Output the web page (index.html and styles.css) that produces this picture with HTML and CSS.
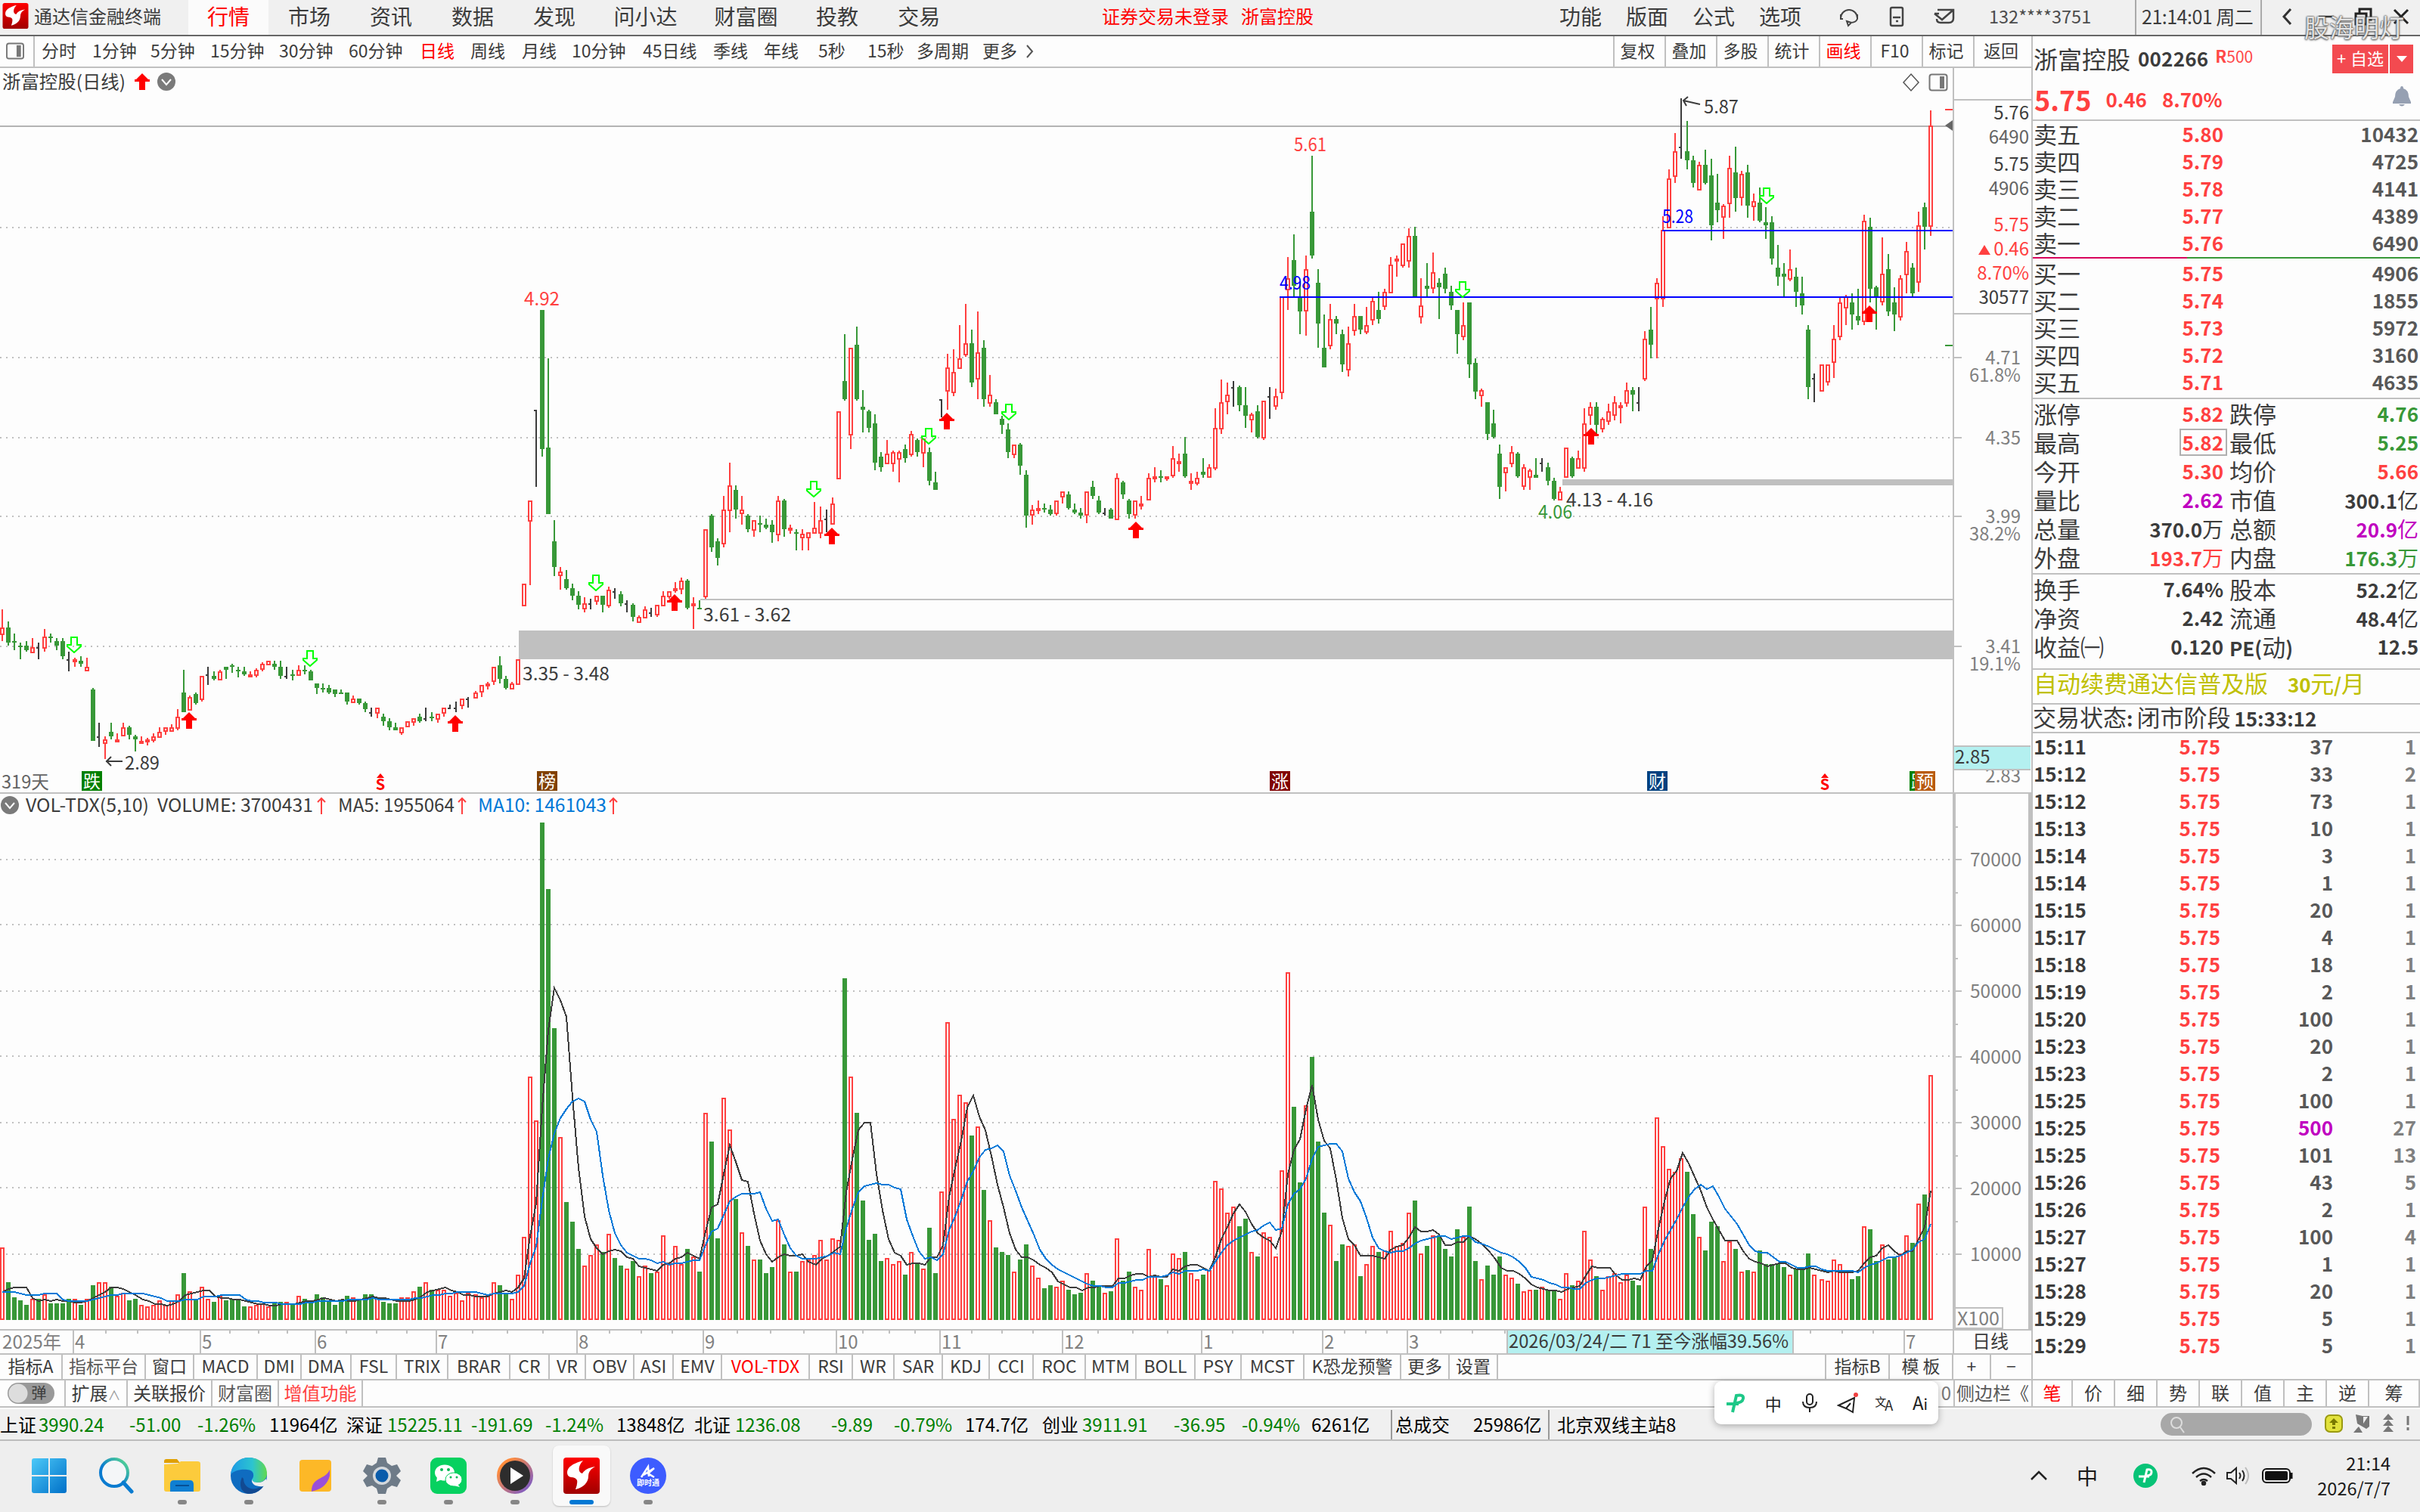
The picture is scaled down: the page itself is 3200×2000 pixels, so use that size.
FILE: index.html
```html
<!DOCTYPE html>
<html lang="zh-CN">
<head>
    <meta charset="utf-8">
    <title>通达信金融终端</title>
    <link rel="stylesheet" href="styles.css">
</head>

<body>
<svg class="defs" width="0" height="0">
    <symbol id="tdx" viewBox="0 0 48 48">
        <defs>
            <linearGradient id="tdxbg" x1="0" y1="0" x2="0" y2="1">
                <stop offset="0" stop-color="#f00"/><stop offset="1" stop-color="#a00000"/>
            </linearGradient>
        </defs>
        <rect width="48" height="48" rx="4" fill="url(#tdxbg)"/>
        <path d="M26 4C12 8 5 13 5 20q0 5 5 6 6 0 8 4 1 4-2 12c10-2 17-9 17-17 0-6 3-10 9-13-8 1-14 4-17 9-6-1-6-10 1-17z" fill="#fff"/>
    </symbol>
    <symbol id="up" viewBox="0 0 20 22">
        <path d="M10 0l8 8h2v3h-6v11H6V11H0V8h2z" fill="#f00"/>
    </symbol>
    <symbol id="down" viewBox="0 0 20 22">
        <path d="M6 1h8v10h5v2l-9 8-9-8v-2h5z" fill="none" stroke="#0f0" stroke-width="2"/>
    </symbol>
    <symbol id="fold" viewBox="0 0 24 24">
        <circle cx="12" cy="12" r="12" fill="#7a7a7a"/>
        <path d="M6 9l6 7 6-7" fill="none" stroke="#fff" stroke-width="2"/>
    </symbol>
    <symbol id="side" viewBox="0 0 26 24">
        <rect x="1.500" y="1.500" width="23" height="21" rx="3" fill="none" stroke="#777" stroke-width="2"/>
        <rect x="15" y="4" width="6" height="16" fill="#777"/>
    </symbol>
</svg>

<header class="titlebar">
    <div class="brand"><svg width="35" height="34"><use href="#tdx"/></svg><span>通达信金融终端</span></div>
    <nav class="menu">
        <a class="on">行情</a><a>市场</a><a>资讯</a><a>数据</a><a>发现</a><a class="w3">问小达</a><a class="w3">财富圈</a><a>投教</a><a>交易</a>
    </nav>
    <div class="login"><span>证券交易未登录</span><span>浙富控股</span></div>
    <nav class="tools"><a>功能</a><a>版面</a><a>公式</a><a>选项</a></nav>
    <div class="sysicons">
        <svg width="30" height="28" viewBox="0 0 30 28" fill="none" stroke="#444" stroke-width="2">
            <path d="M4 16a11 11 0 1 1 22 0M4 11v6h3M26 11v6q-2 5-9 5M12 20l6 2-4 4z"/>
        </svg>
        <svg width="20" height="28" viewBox="0 0 20 28" fill="none" stroke="#444" stroke-width="2.500">
            <rect x="2" y="2" width="16" height="24" rx="2"/><path d="M5 15h10M9 20h3"/>
        </svg>
        <svg width="30" height="24" viewBox="0 0 30 24" fill="none" stroke="#444" stroke-width="2.500">
            <path d="M6 3h21v11q0 6-6 6H10q-5 0-5-5M2 8l10 8L27 3M2 8h6"/>
        </svg>
    </div>
    <div class="account">132****3751</div>
    <div class="clock">21:14:01 周二</div>
    <div class="winbtns">
        <svg width="16" height="24" viewBox="0 0 16 24"><path d="M13 2L4 12l9 10" fill="none" stroke="#333" stroke-width="3"/></svg>
        <svg width="20" height="24" viewBox="0 0 20 24"><path d="M0 12h20" stroke="#333" stroke-width="2.500"/></svg>
        <svg width="24" height="24" viewBox="0 0 24 24"><path d="M7 7V2h15v14h-5M2 8h14v14H2z" fill="none" stroke="#222" stroke-width="3"/></svg>
        <svg width="22" height="22" viewBox="0 0 22 22"><path d="M2 2l18 18M20 2L2 20" stroke="#222" stroke-width="3"/></svg>
    </div>
    <div class="watermark">股海明灯</div>
</header>

<main>
    <section class="left">
        <div class="periods">
            <div class="sw"><svg width="26" height="23"><use href="#side"/></svg></div>
            <div class="plist">
                <a>分时</a><a>1分钟</a><a>5分钟</a><a>15分钟</a><a>30分钟</a><a>60分钟</a><a class="red">日线</a><a>周线</a><a>月线</a><a>10分钟</a><a>45日线</a><a>季线</a><a>年线</a><a>5秒</a><a>15秒</a><a>多周期</a><a>更多<svg width="12" height="20" viewBox="0 0 12 20"><path d="M2 2l7 8-7 8" fill="none" stroke="#555" stroke-width="2"/></svg></a>
            </div>
            <div class="pbtns">
                <a>复权</a><a>叠加</a><a>多股</a><a>统计</a><a class="red">画线</a><a>F10</a><a>标记</a><a>返回</a>
            </div>
        </div>
        <svg id="kline" width="2686" height="958" viewBox="0 90 2686 958"></svg>
        <svg id="vol" width="2686" height="708" viewBox="0 1050 2686 708"></svg>
        <svg id="dates" width="2686" height="30" viewBox="0 1760 2686 30"></svg>
        <div class="tabs">
            <a>指标A</a><a class="dim">指标平台</a><a>窗口</a><a>MACD</a><a>DMI</a><a>DMA</a><a>FSL</a><a>TRIX</a><a>BRAR</a><a>CR</a><a>VR</a><a>OBV</a><a>ASI</a><a>EMV</a><a class="red">VOL-TDX</a><a>RSI</a><a>WR</a><a>SAR</a><a>KDJ</a><a>CCI</a><a>ROC</a><a>MTM</a><a>BOLL</a><a>PSY</a><a>MCST</a><a>K恐龙预警</a><a>更多</a><a>设置</a><a></a><a>指标B</a><a>模 板</a><a>+</a><a>−</a>
        </div>
    </section>

    <aside class="quote">
        <div class="head">
            <div class="name">
                <span class="cn">浙富控股</span><b>002266</b><span class="r500"><b>R</b>500</span>
                <span class="add"><i>+<u></u>自选</i><i class="dd"><svg width="14" height="8"><path d="M0 0h14l-7 8z" fill="#fff"/></svg></i></span>
            </div>
            <div class="last">
                <b class="big">5.75</b><b>0.46</b><b>8.70%</b>
                <svg class="bell" width="24" height="27" viewBox="0 0 24 27"><path d="M12 0q2 0 2 3 7 2 7 11l3 7v2H0v-2l3-7Q3 5 10 3q0-3 2-3zM8 24h8q-4 5-8 0z" fill="#96a0b2"/></svg>
            </div>
        </div>
        <div class="book">
            <div><span>卖五</span><b class="r">5.80</b><b>10432</b></div>
            <div><span>卖四</span><b class="r">5.79</b><b>4725</b></div>
            <div><span>卖三</span><b class="r">5.78</b><b>4141</b></div>
            <div><span>卖二</span><b class="r">5.77</b><b>4389</b></div>
            <div><span>卖一</span><b class="r">5.76</b><b>6490</b></div>
        </div>
        <div class="ratio"></div>
        <div class="book buy">
            <div><span>买一</span><b class="r">5.75</b><b>4906</b></div>
            <div><span>买二</span><b class="r">5.74</b><b>1855</b></div>
            <div><span>买三</span><b class="r">5.73</b><b>5972</b></div>
            <div><span>买四</span><b class="r">5.72</b><b>3160</b></div>
            <div><span>买五</span><b class="r">5.71</b><b>4635</b></div>
        </div>
        <div class="detail">
            <div><span>涨停</span><b class="r">5.82</b><span>跌停</span><b class="g">4.76</b></div>
            <div><span>最高</span><b class="r box">5.82</b><span>最低</span><b class="g">5.25</b></div>
            <div><span>今开</span><b class="r">5.30</b><span>均价</span><b class="r">5.66</b></div>
            <div><span>量比</span><b class="m">2.62</b><span>市值</span><b>300.1<i>亿</i></b></div>
            <div><span>总量</span><b>370.0<i>万</i></b><span>总额</span><b class="m">20.9<i>亿</i></b></div>
            <div><span>外盘</span><b class="r">193.7<i>万</i></b><span>内盘</span><b class="g">176.3<i>万</i></b></div>
        </div>
        <div class="detail base">
            <div><span>换手</span><b>7.64%</b><span>股本</span><b>52.2<i>亿</i></b></div>
            <div><span>净资</span><b>2.42</b><span>流通</span><b>48.4<i>亿</i></b></div>
            <div><span>收益㈠</span><b>0.120</b><span class="pe"><b>PE(</b>动<b>)</b></span><b>12.5</b></div>
        </div>
        <div class="ad">自动续费通达信普及版<span><b>30</b>元<b>/</b>月</span></div>
        <div class="state">交易状态<b>:</b> 闭市阶段 <b>15:33:12</b></div>
        <div class="ticks" id="ticks"></div>
    </aside>
</main>

<div class="ext">
    <a><i class="pill">弹</i></a><a>扩展<small>∧</small></a><a>关联报价</a><a class="dim">财富圈</a><a class="hot">增值功能</a><a class="rest">0</a><a class="dim">侧边栏《</a>
    <a class="red">笔</a><a>价</a><a>细</a><a>势</a><a>联</a><a>值</a><a>主</a><a>逆</a><a>筹</a>
</div>

<div class="status">
    <span>上证</span><em>3990.24</em><em>-51.00</em><em>-1.26%</em><span>11964亿</span>
    <span>深证</span><em>15225.11</em><em>-191.69</em><em>-1.24%</em><span>13848亿</span>
    <span>北证</span><em>1236.08</em><em>-9.89</em><em>-0.79%</em><span>174.7亿</span>
    <span>创业</span><em>3911.91</em><em>-36.95</em><em>-0.94%</em><span>6261亿</span>
    <span class="sep">总成交</span><span>25986亿</span><span class="sep host">北京双线主站8</span>
    <div class="search"><svg width="22" height="24" viewBox="0 0 22 24"><circle cx="10" cy="9" r="7" fill="none" stroke="#ddd" stroke-width="2"/><path d="M15 15l5 7" stroke="#ddd" stroke-width="2"/></svg></div>
    <div class="sticons">
        <svg width="24" height="24" viewBox="0 0 24 24"><rect x="1" y="1" width="22" height="22" rx="6" fill="#e2e23c" stroke="#9a9a10" stroke-width="2"/><path d="M12 5l6 6h-4v3h-4v-3H6zM10 16h4v3h-4z" fill="#7a7a00"/></svg>
        <svg width="24" height="26" viewBox="0 0 24 26"><path d="M3 1l9 2 9 0v14l-4 3L5 13zM7 17l5 8H0l5-6z" fill="#777"/><path d="M13 4h6l-6 9z" fill="#eee"/></svg>
        <svg width="16" height="26" viewBox="0 0 16 26"><path d="M8 0l7 8H1zM8 8l7 8H1zM8 16l7 8H1z" fill="#777"/></svg>
        <svg width="8" height="24" viewBox="0 0 8 24"><path d="M4 2v12M4 17v4" stroke="#777" stroke-width="3"/></svg>
    </div>
</div>

<footer class="taskbar">
    <div class="apps">
        <span><svg width="46" height="46" viewBox="0 0 46 46"><defs><linearGradient id="win" x1="0" y1="0" x2="1" y2="1"><stop offset="0" stop-color="#4cc9f8"/><stop offset="1" stop-color="#0070c8"/></linearGradient></defs><path d="M0 3q0-3 3-3h19v22H0zM24 0h19q3 0 3 3v19H24zM0 24h22v22H3q-3 0-3-3zM24 24h22v19q0 3-3 3H24z" fill="url(#win)"/></svg></span>
        <span><svg width="48" height="50" viewBox="0 0 48 50"><defs><linearGradient id="sea" x1="0" y1="1" x2="1" y2="0"><stop offset="0.400" stop-color="#0a7bd0"/><stop offset="1" stop-color="#5de08a"/></linearGradient></defs><circle cx="22" cy="21" r="18" fill="#f4f6f8" stroke="url(#sea)" stroke-width="4"/><path d="M34 34l11 12" stroke="#0a7bd0" stroke-width="5" stroke-linecap="round"/></svg></span>
        <span class="run"><svg width="48" height="46" viewBox="0 0 48 46"><path d="M0 4q0-3 3-3h14l4 5H0z" fill="#e0a000"/><path d="M0 8l18-1 4-3h22q4 0 4 3v34q0 3-3 3H3q-3 0-3-3z" fill="#fccb3c"/><path d="M8 44V34q0-5 5-5h21q5 0 5 5v10z" fill="#0f7fd2"/><path d="M15 36h18" stroke="#064f94" stroke-width="2"/></svg></span>
        <span class="run"><svg width="48" height="48" viewBox="0 0 48 48"><defs><linearGradient id="edg" x1="0" y1="0" x2="1" y2="0"><stop offset="0" stop-color="#1d9be6"/><stop offset="0.600" stop-color="#2cc4d0"/><stop offset="1" stop-color="#62d94e"/></linearGradient></defs><circle cx="24" cy="24" r="24" fill="#0f6cc0"/><path d="M0 22C2 8 12 0 24 0c14 0 24 9 24 21 0 8-6 12-12 12-6 0-8-2-8-4 4-4 3-13-6-13C12 15 4 18 0 22z" fill="url(#edg)"/><path d="M17 28c0 10 9 15 17 13 4-1 7-3 9-3-4 6-11 10-19 10C15 47 10 38 15 26z" fill="#124a92"/><path d="M28 29c1 3 4 4 8 4 5 0 8-2 11-5l1 8-5 2c-8 1-16-2-15-9z" fill="#eee"/></svg></span>
        <span><svg width="42" height="42" viewBox="0 0 42 42"><rect width="42" height="42" rx="4" fill="#fdb827"/><path d="M40 13v8q-4 16-21 20l-3 1c0-20 18-15 24-29z" fill="#9b4fd8"/></svg></span>
        <span class="run"><svg width="50" height="50" viewBox="0 0 50 50"><path d="M20 1h10l2 7 6 4 7-2 5 9-6 6 6 6-5 9-7-2-6 4-2 7H20l-2-7-6-4-7 2-5-9 6-6-6-6 5-9 7 2 6-4z" fill="#6e7b88"/><circle cx="25" cy="25" r="12" fill="#d4d8dc"/><circle cx="25" cy="25" r="8.500" fill="#0a5cab"/></svg></span>
        <span class="run"><svg width="48" height="48" viewBox="0 0 48 48"><rect width="48" height="48" rx="9" fill="#07d160"/><ellipse cx="19" cy="20" rx="13" ry="10.500" fill="#fff"/><path d="M9 26l-1 6 7-3z" fill="#fff"/><ellipse cx="31" cy="29" rx="11" ry="9" fill="#fff" stroke="#07d160"/><path d="M36 35l3 4-8-2z" fill="#fff"/><g fill="#07b955"><circle cx="15" cy="16" r="2"/><circle cx="24" cy="16" r="2"/><circle cx="27" cy="26" r="1.500"/><circle cx="35" cy="26" r="1.500"/></g></svg></span>
        <span class="run"><svg width="48" height="48" viewBox="0 0 48 48"><defs><linearGradient id="ply" x1="0" y1="0" x2="1" y2="1"><stop offset="0.200" stop-color="#ff8c3c"/><stop offset="0.900" stop-color="#7a5ac8"/></linearGradient></defs><circle cx="24" cy="24" r="24" fill="url(#ply)"/><circle cx="24" cy="24" r="20" fill="#2d2d2d"/><path d="M18 13l17 11-17 11z" fill="#fff"/></svg></span>
        <span class="cur"><svg width="48" height="48"><use href="#tdx"/></svg></span>
        <span class="run"><svg width="48" height="48" viewBox="0 0 48 48"><circle cx="24" cy="24" r="24" fill="#3d5cff"/><path d="M15 26l9-14 1 13M18 23l14-9-8 7 8 5" fill="none" stroke="#fff" stroke-width="2.500"/><text x="24" y="37" text-anchor="middle" font-size="10" font-weight="700" fill="#fff">即时通</text></svg></span>
    </div>
    <div class="tray">
        <svg width="22" height="14" viewBox="0 0 22 14"><path d="M1 12L11 2l10 10" fill="none" stroke="#222" stroke-width="2.500"/></svg>
        <span class="zh">中</span>
        <svg width="32" height="32" viewBox="0 0 32 32"><circle cx="16" cy="16" r="16" fill="#08c377"/><path d="M14 25l4-17q6-1 6 3 0 5-7 5M7 17h14" fill="none" stroke="#fff" stroke-width="3"/></svg>
        <svg width="34" height="26" viewBox="0 0 34 26" fill="none" stroke="#222" stroke-width="2.500"><path d="M2 10q15-14 30 0M7 15q10-9 20 0M12 20q5-4 10 0"/><circle cx="17" cy="23" r="2" fill="#222"/></svg>
        <svg width="34" height="26" viewBox="0 0 34 26" fill="none" stroke="#222" stroke-width="2"><path d="M2 9h5l7-6v20l-7-6H2zM18 9q3 4 0 8M22 6q5 7 0 14"/><path d="M26 2q8 11 0 22" stroke="#bbb"/></svg>
        <svg width="42" height="20" viewBox="0 0 42 20"><rect x="1" y="1" width="36" height="18" rx="5" fill="none" stroke="#111" stroke-width="2"/><rect x="4" y="4" width="30" height="12" rx="2" fill="#111"/><path d="M39 6v8" stroke="#111" stroke-width="3"/></svg>
        <div class="when">21:14<br>2026/7/7</div>
    </div>
</footer>

<div class="ime">
    <svg width="26" height="26" viewBox="0 0 26 26"><path d="M9 25l5-22q10-2 9 4-1 6-12 6M1 14h16" fill="none" stroke="#1ec888" stroke-width="4"/></svg>
    <span>中</span>
    <svg width="22" height="26" viewBox="0 0 22 26" fill="none" stroke="#222" stroke-width="2"><rect x="7" y="1" width="8" height="14" rx="4"/><path d="M2 11q0 8 9 8t9-8M11 19v6"/></svg>
    <svg width="28" height="30" viewBox="0 0 28 30"><path d="M2 18L23 8l-2 19-9-5zM12 22l6-7" fill="none" stroke="#222" stroke-width="2"/><circle cx="25" cy="4" r="3" fill="#f04040"/></svg>
    <span class="tr"><small>文</small>A</span>
    <span class="ai">A<small>i</small></span>
</div>

<script src="chart.js"></script>
</body>
</html>
```

FILE: styles.css
```css
* {
    margin: 0;
    padding: 0;
    box-sizing: border-box;
}

body {
    width: 3200px;
    height: 2000px;
    overflow: hidden;
    position: relative;
    background: #fdfdfd;
    color: #3c3c3c;
    font: normal 24px "Noto Sans CJK SC", "Noto Sans", sans-serif;
}

i, em {
    font-style: normal;
}

svg {
    display: block;
    flex: none;
}

.defs {
    position: absolute;
}

.red {
    color: #f00;
}

.dim {
    color: #5a5a5a;
}

/* 标题栏 */
.titlebar {
    display: grid;
    grid-template-columns: 249px 1208px 605px 368px 200px 195px 166px 1fr;
    height: 48px;
    line-height: 42px;
    border-bottom: 2px solid #666;
    background: #f0f0f0;
}

.brand {
    display: flex;
    align-items: center;
    gap: 7px;
    padding: 0 0 4px 3px;
}

.menu {
    display: flex;
    font-size: 28px;
}

.menu a {
    padding: 0 26px;
}

.menu a.w3 {
    padding: 0 24.5px;
}

.menu .on {
    padding: 0 25px;
    background: #fbfbfb;
    color: #f00;
}

.login {
    display: flex;
    gap: 16px;
    color: #f00;
}

.tools {
    display: flex;
    gap: 32px;
    font-size: 28px;
}

.sysicons {
    display: flex;
    align-items: center;
    justify-content: space-between;
    padding: 0 44px 3px 0;
}

.account {
    font-size: 23.5px;
    color: #4c4c4c;
    border-right: 2px solid #aaa;
}

.clock {
    padding-left: 7px;
    font-size: 25px;
    letter-spacing: -.5px;
    border-right: 2px solid #aaa;
}

.winbtns {
    display: flex;
    align-items: center;
    gap: 27px;
    padding: 0 0 3px 25px;
}

.winbtns svg:first-child {
    margin-right: 7px;
}

.watermark {
    position: absolute;
    top: 14px;
    left: 3047px;
    line-height: 42px;
    font-size: 33px;
    color: rgba(255, 255, 255, .85);
    text-shadow: 0 0 2px #444, 0 0 2px #555, 0 1px 3px #666;
}

main {
    display: grid;
    grid-template-columns: 2688px 512px;
    height: 1776px;
}

.left {
    border-right: 2px solid #c0c0c0;
    height: 1776px;
}

.periods {
    display: grid;
    grid-template-columns: 46px 1fr 553px;
    height: 42px;
    line-height: 37px;
    font-size: 23px;
    border-bottom: 2px solid #c0c0c0;
}

.sw {
    padding: 8px 0 0 7px;
    border-right: 2px solid #c0c0c0;
}

.plist {
    display: grid;
    grid-template-columns: 67px 77px 79px 91px 92px 94px 67px 68px 66px 94px 93px 67px 72px 65px 65px 87px 90px;
    padding-left: 9px;
    white-space: nowrap;
}

.plist a:last-child {
    display: flex;
    gap: 11px;
}

.plist a svg {
    margin-top: 10px;
}

.pbtns {
    display: grid;
    grid-template-columns: repeat(7, 68px) 77px;
    text-align: center;
}

.pbtns a {
    border-left: 2px solid #c0c0c0;
    padding-right: 5px;
}

#kline, #vol, #dates {
    border-bottom: 2px solid #c0c0c0;
    box-sizing: content-box;
    overflow: visible;
}

.tabs {
    display: grid;
    grid-template-columns: 83px 110px 64px 84px 58px 66px 60px 68px 82px 52px 48px 64px 52px 64px 116px 57px 55px 64px 62px 58px 69px 67px 78px 61px 83px 128px 64px 64px 434px 84px 84px 50px 53px;
    height: 32px;
    line-height: 29px;
    font-size: 23px;
    text-align: center;
    white-space: nowrap;
}

.tabs a {
    border-right: 2px solid #c0c0c0;
}

.tabs a:last-child {
    border: 0;
}

/* 右侧报价 */
.quote {
    font-size: 31px;
    height: 1776px;
}

.quote b {
    font-size: 26px;
}

.quote .r {
    color: #ff4040;
}

.quote .g {
    color: #389838;
}

.quote .m {
    color: #c000c0;
}

.head {
    height: 112px;
    border-bottom: 2px solid #c0c0c0;
}

.name {
    display: flex;
    align-items: center;
    height: 58px;
    padding: 0 9px 0 1px;
    font-size: 32px;
    line-height: 36px;
}

.name > b {
    margin-left: 10px;
    letter-spacing: .2px;
}

.r500 {
    margin: -8px auto 0 9px;
    font-size: 21px;
    color: #ff4848;
}

.r500 b {
    font-size: 22px;
}

.add {
    display: grid;
    grid-template-columns: 74px 31px;
    gap: 2px;
    height: 38px;
    margin-top: 2px;
    font-size: 22px;
    line-height: 34px;
    color: #fff;
    text-align: center;
}

.add u {
    padding-left: 6px;
}

.add i {
    background: #f34a50;
}

.add .dd {
    display: flex;
    align-items: center;
    justify-content: center;
}

.last {
    display: flex;
    align-items: center;
    gap: 20px;
    height: 50px;
    padding: 0 12px 1px 2px;
    color: #ff4040;
}

.last .big {
    font-size: 36px;
}

.last b:nth-child(2) {
    margin-left: -1px;
}

.bell {
    margin: -7px 0 0 auto;
}

.book div {
    display: grid;
    grid-template-columns: 131px 120px 258px;
    height: 36px;
    line-height: 34px;
    padding-left: 1px;
}

.book b, .detail > div > b {
    text-align: right;
}

.book b:last-child {
    color: #585858;
}

.ratio {
    height: 2px;
    background: linear-gradient(90deg, #d8005c 0 204px, #389838 204px);
}

.buy {
    padding: 2px 0;
    border-bottom: 2px solid #c0c0c0;
    height: 186px;
}

.detail {
    height: 232px;
    padding-top: 1px;
    border-bottom: 2px solid #c0c0c0;
}

.detail > div {
    display: grid;
    grid-template-columns: 110px 141px 79px 179px;
    height: 38px;
    line-height: 36px;
    padding-left: 1px;
    white-space: nowrap;
}

.detail > div > span:nth-child(3) {
    padding-left: 8px;
}

.detail i {
    font-weight: 400;
    font-size: 28px;
}

.base {
    height: 126px;
    padding-top: 1px;
}

.detail .box {
    justify-self: end;
    height: 36px;
    margin-right: -5px;
    padding: 0 3px 0 2px;
    line-height: 32px;
    border: 2px solid #b0b0b0;
}

.ad {
    height: 46px;
    line-height: 33px;
    padding-left: 1px;
    color: #c0c000;
    border-bottom: 2px solid #c0c0c0;
    white-space: nowrap;
}

.ad span {
    margin-left: 26px;
    letter-spacing: -.2px;
}

.state {
    height: 38px;
    line-height: 31px;
    font-size: 31px;
    white-space: nowrap;
    border-bottom: 2px solid #c0c0c0;
    word-spacing: -2px;
}

.ticks div {
    display: grid;
    grid-template-columns: 100px 147px 149px 110px;
    height: 36px;
    line-height: 33px;
    padding-left: 1px;
    text-align: right;
}

.ticks b:first-child {
    text-align: left;
}

.ticks b:nth-child(3) {
    color: #585858;
}

.ticks b:nth-child(4) {
    color: #808080;
}

.ticks .big b:nth-child(3) {
    color: #c000c0;
}

/* 底部 */
.ext {
    display: grid;
    grid-template-columns: 87px 82px 112px 88px 111px 2105px 103px 53px repeat(7, 56px) 67px;
    height: 38px;
    line-height: 32px;
    border-top: 2px solid #c0c0c0;
    border-bottom: 2px solid #c0c0c0;
    text-align: center;
    white-space: nowrap;
    background: #fdfdfd;
}

.ext a {
    border-right: 2px solid #c0c0c0;
}

.ext .hot {
    color: #ff4040;
}

.ext .rest {
    text-align: right;
    padding-right: 3px;
    color: #777;
}

.ext small {
    font-size: 17px;
    color: #999;
}

.ext a:nth-child(7) {
    overflow: hidden;
    padding-left: 2px;
    text-align: left;
}

.pill {
    display: block;
    width: 62px;
    height: 28px;
    margin: 3px 0 0 10px;
    padding-left: 21px;
    border-radius: 14px;
    background: radial-gradient(circle at 14px 14px, #ddd 12px, #999 13px);
    font-size: 20px;
    line-height: 26px;
}

.status {
    display: grid;
    grid-template-columns: 51px 120px 90px 95px 102px 54px 111px 98px 94px 103px 54px 127px 83px 94px 102px 53px 121px 90px 92px 105px 109px 99px 810px 217px 1fr;
    height: 44px;
    line-height: 38px;
    border-top: 2px solid #fff;
    border-bottom: 2px solid #bdbdbd;
    background: #f0f0f0;
    color: #000;
    white-space: nowrap;
    padding-top: 1px;
}

.status em {
    color: #008000;
}

.status .sep {
    border-left: 2px solid #999;
    padding-left: 4px;
}

.status .host {
    padding-left: 10px;
}

.search {
    width: 200px;
    height: 30px;
    margin-top: 4px;
    padding: 4px 11px;
    border-radius: 15px;
    background: #a8a8a8;
}

.sticons {
    display: flex;
    align-items: center;
    gap: 14px;
    padding-bottom: 4px;
}

.taskbar {
    display: flex;
    justify-content: space-between;
    height: 94px;
    background: #eee;
}

.apps {
    display: flex;
    gap: 12px;
    padding: 6px 0 0 27px;
}

.apps span {
    position: relative;
    display: flex;
    align-items: center;
    justify-content: center;
    width: 76px;
    height: 80px;
}

.apps .cur {
    border-radius: 8px;
    background: #f9f9f9;
    box-shadow: 0 1px 2px #bbb;
}

.apps .run::after, .apps .cur::after {
    content: "";
    position: absolute;
    bottom: 2px;
    width: 12px;
    height: 6px;
    border-radius: 3px;
    background: #868686;
}

.apps .cur::after {
    width: 32px;
    background: #0078d4;
}

.tray {
    display: flex;
    align-items: center;
    padding: 0 39px 2px 0;
    color: #1a1a1a;
}

.tray .zh {
    width: 28px;
    margin: 0 47px 0 39px;
    font-size: 28px;
}

.tray svg:nth-of-type(3) {
    margin: 0 12px 0 44px;
}

.tray svg:nth-of-type(5) {
    margin-left: 14px;
}

.when {
    width: 128px;
    font-size: 23.5px;
    line-height: 33px;
    text-align: right;
}

/* 输入法浮条 */
.ime {
    position: absolute;
    left: 2267px;
    top: 1827px;
    display: flex;
    align-items: center;
    justify-content: space-between;
    width: 296px;
    height: 57px;
    padding: 0 14px 0 15px;
    border-radius: 9px;
    background: #fff;
    box-shadow: 0 2px 10px rgba(0, 0, 0, .3);
    color: #222;
    font-size: 22px;
    line-height: 26px;
}

.ime .tr {
    font-size: 18px;
    margin-left: -4px;
}

.ime .tr small {
    font-size: 15px;
    vertical-align: 6px;
    margin-right: -2px;
}

.ime .ai {
    font-size: 24px;
}

.ime .ai small {
    font-size: 20px;
}

/* 图表文字 */
#kline text, #vol text, #dates text {
    font-size: 24px;
    fill: #3c3c3c;
}

#kline .lb, #vol .lb, #dates .lb {
    fill: #808080;
}

#kline .r, #vol .r {
    fill: #ff4040;
}

#kline .g {
    fill: #389838;
}

#kline .b {
    fill: #00f;
}

#kline .mid {
    fill: #646464;
}

#vol .ma10 {
    fill: #0078d7;
}

#kline .badge {
    font-size: 23px;
    fill: #fff;
}

#kline .money {
    font-size: 20px;
    font-weight: 700;
    fill: #f00;
}
```

FILE: chart.js
```js
// 逐笔
const ticks = [
    ['15:11', 37, 1], ['15:12', 33, 2], ['15:12', 73, 1], ['15:13', 10, 1], ['15:14', 3, 1], ['15:14', 1, 1],
    ['15:15', 20, 1], ['15:17', 4, 1], ['15:18', 18, 1], ['15:19', 2, 1], ['15:20', 100, 1], ['15:23', 20, 1],
    ['15:23', 2, 1], ['15:25', 100, 1], ['15:25', 500, 27], ['15:25', 101, 13], ['15:26', 43, 5], ['15:26', 2, 1],
    ['15:27', 100, 4], ['15:27', 1, 1], ['15:28', 20, 1], ['15:29', 5, 1], ['15:29', 5, 1]
]
document.getElementById('ticks').innerHTML = ticks.map(t =>
    `<div class="${t[1] >= 500 ? 'big' : ''}"><b>${t[0]}</b><b class="r">5.75</b><b>${t[1]}</b><b>${t[2]}</b></div>`
).join('')

// K线：类型 最高 实体上 实体下 最低，每段自带纵向比例
// r 阳线 g 阴线 k 平盘(量红) K 平盘(量绿)
const blocks = [
    {top: 380, k: 2.306, rows: `r 982 1039 1060 1078,g 1019 1039 1083 1092,g 1057 1079 1083 1106,g 1083 1094 1098 1133,g 1079 1093 1106 1110,r 1070 1098 1115 1115,K 1083 1098 1102 1133,r 1042 1066 1100 1110,g 1056 1066 1070 1083,g 1070 1079 1092 1106,
g 1070 1079 1125 1133,K 1110 1135 1138 1170,r 1129 1135 1143 1158,g 1125 1138 1147 1158,r 1130 1158 1170 1170,g 1222 1227 1384 1384,k 1328 1370 1374 1402,r 1370 1380 1392 1440,g 1328 1356 1370 1379,r 1360 1380 1387 1387,
r 1328 1343 1369 1369,g 1338 1343 1365 1379,g 1365 1370 1379 1415,r 1370 1384 1392 1392,r 1375 1380 1389 1397,r 1360 1370 1384 1388,r 1343 1357 1373 1375,r 1342 1342 1358 1365,r 1333 1342 1356 1356,r 1287 1311 1346 1352,
g 1167 1236 1296 1296,r 1245 1250 1290 1290,g 1236 1241 1268 1272,r 1186 1186 1258 1263,k 1158 1181 1185 1213,g 1172 1185 1194 1199,r 1167 1172 1197 1197,g 1158 1158 1167 1194,g 1148 1153 1158 1176,g 1158 1167 1171 1190,
g 1158 1171 1180 1185,r 1172 1181 1189 1189,r 1163 1168 1185 1190,r 1144 1149 1169 1171,r 1139 1140 1153 1153,g 1140 1148 1158 1167,g 1139 1158 1185 1194,k 1158 1185 1189 1194,g 1167 1181 1185 1199,r 1153 1168 1184 1184,
g 1153 1167 1171 1181,g 1167 1171 1199 1199,g 1208 1208 1222 1241,g 1208 1222 1226 1236,g 1213 1222 1236 1241,g 1227 1227 1241 1250,g 1227 1236 1241 1241,g 1236 1236 1264 1273,r 1245 1255 1267 1267,g 1255 1255 1268 1273,
g 1264 1268 1287 1296,K 1282 1296 1300 1310,r 1283 1283 1300 1314,g 1301 1310 1324 1338,g 1314 1324 1342 1351,g 1328 1342 1351 1351,r 1342 1343 1360 1365,r 1324 1325 1341 1341,r 1314 1315 1328 1337,g 1301 1310 1324 1328,
k 1282 1314 1318 1324,g 1296 1310 1314 1324,r 1301 1302 1318 1328,r 1283 1283 1300 1310,k 1273 1282 1286 1286,k 1264 1282 1286 1296,r 1255 1255 1277 1287,k 1250 1254 1258 1282,r 1231 1237 1253 1255,r 1213 1214 1237 1250,
r 1204 1209 1217 1227,r 1158 1159 1204 1213,g 1125 1153 1194 1208,g 1185 1194 1222 1227,r 1204 1209 1225 1227,r 1134 1135 1212 1213,r 904 905 971 974,r 650 652 714 909,k 374 374 378 609,g 69 69 493 517,
g 217 489 692 692,g 710 775 853 881,r 853 867 880 922,g 862 890 918 922,g 904 918 941 955,g 927 941 968 982,r 945 965 982 992,k 950 964 968 982,r 941 942 958 968,g 941 941 968 992,
r 913 922 972 978,K 918 928 932 950,g 927 936 964 975,k 955 964 968 992,g 964 968 1005 1019,r 1001 1007 1023 1023,r 973 983 1009 1009,K 978 991 995 1005,r 968 970 1001 1005,r 927 942 971 973,
r 927 928 944 950,r 899 920 926 930,r 885 895 921 936,g 890 895 978 982,r 945 965 972 1042,g 955 976 981 982`},
    {top: 380, k: 3, rows: `r 961 961 1228 1235,g 900 906 1032 1050,g 996 1008 1074 1104,r 828 883 1019 1032,
r 696 787 887 972,g 786 804 882 918,r 828 882 900 942,g 900 906 960 972,r 924 925 965 990,g 906 936 942 972,g 918 942 954 960,g 924 942 972 1014,r 828 846 983 1008,g 840 846 960 990,
r 942 955 965 978,g 960 972 978 1044,r 960 979 995 1044,r 972 973 995 1044,r 852 955 977 978,r 870 925 977 996,k 882 918 922 972,r 834 858 941 942,r 492 493 761 762,g 186 372 444 450,
r 240 241 587 642,g 156 228 444 450,g 408 474 486 576,g 486 492 558 576,g 504 540 696 726,g 654 672 714 732,r 606 660 701 702,r 648 655 701 732,r 648 655 683 774,g 624 642 678 696,
r 570 583 665 672,g 600 606 654 672,r 600 601 659 714,g 636 654 768 786,g 732 774 804 804,k 445 445 449 516,r 264 319 413 486,r 246 336 419 432,r 150 283 323 324,r 66 222 269 276,
g 168 222 378 396,r 96 259 365 444,g 210 240 444 474,r 348 427 461 474,g 444 456 504 504,g 510 522 546 582,g 540 564 654 678,r 624 625 665 678,g 618 624 708 744,g 726 744 906 954,
r 864 883 905 942,r 846 877 887 900,g 858 876 882 894,g 864 882 900 906,r 846 847 899 906,r 810 811 833 858,g 810 822 876 882,g 858 882 894 900,g 876 894 906 918,r 810 811 905 936,
g 768 792 828 840,g 828 846 894 900,k 876 895 899 906,g 876 882 918 918,r 738 757 923 924,g 768 774 822 840,g 840 846 900 918,r 846 847 905 918,r 828 859 869 882,r 738 757 845 846,
r 714 751 761 774,g 726 750 756 774,r 750 751 761 768,r 630 679 749 756,r 660 691 701 732,g 594 660 750 756,r 738 769 779 804,r 732 757 779 786,g 678 732 744 756,r 702 715 755 756,
r 480 559 719 726,r 366 457 563 582,r 378 427 455 504,k 372 397 401 474,g 390 396 468 492,g 396 468 510 558,r 498 505 527 576,g 468 492 594 600,r 450 451 599 606,k 396 433 437 522,r 402 433 473 486`},
    {top: 120, k: 2.613, rows: `r 713 713 1043 1066,r 575 649 689 758,g 497 585 673 713,g 660 713 763 841,r 570 618 763 848,g 225 418 570 580,g 618 664 805 889,g 774 889 956 956,r 737 790 882 894,
g 779 790 805 841,g 826 841 945 972,r 816 874 966 988,r 737 780 829 847,g 779 779 826 841,r 747 811 835 841,r 713 729 793 810,g 695 758 789 805,r 685 696 746 758,r 575 602 699 700,
r 570 581 591 643,r 528 529 604 612,r 476 503 589 612,g 470 502 711 711,r 648 743 783 805,g 596 674 685 711,r 559 628 685 700,g 648 664 679 789,g 612 632 685 700,g 674 695 742 758,
g 758 758 841 909,r 732 811 851 862,g 732 732 946 993,g 925 940 1040 1066,r 1030 1036 1055 1092,g 1077 1077 1186 1207,g 1103 1150 1197 1202,g 1223 1254 1369 1411,r 1300 1302 1321 1385,r 1228 1249 1290 1301,
g 1249 1254 1333 1338,r 1291 1302 1368 1380,r 1307 1312 1337 1380,g 1270 1328 1337 1337,k 1270 1286 1290 1317,g 1286 1301 1348 1364,g 1338 1348 1411 1416,r 1369 1386 1415 1416,r 1233 1234 1337 1338,g 1265 1270 1333 1338,
r 1244 1270 1306 1307,r 1098 1150 1306 1317,r 1077 1092 1123 1155,g 1077 1092 1155 1186,r 1129 1134 1170 1181,r 1082 1109 1144 1155,r 1056 1077 1123 1139,r 1077 1088 1097 1150,r 1009 1035 1081 1092,g 1024 1035 1050 1108,
K 1024 1077 1081 1108,r 831 857 997 1004,g 747 826 878 925,r 648 664 720 925,r 435 483 720 747,r 272 304 475 476,r 146 210 297 319,k 25 194 198 235,g 105 209 240 272,g 225 240 319 335,
r 246 257 344 345,g 204 256 319 324,g 235 293 465 517,g 287 387 413 455,r 392 398 438 512,r 225 268 391 439,g 193 282 371 418,r 277 288 370 397,g 256 282 397 439,r 355 383 402 449,
g 335 387 449 455,g 402 455 465 512,g 434 455 580 601,g 533 612 643 674,g 596 632 643 711,r 549 618 652 658,g 612 643 695 747,g 643 700 742 774,g 810 826 1024 1066,k 977 994 998 1077,
r 946 947 1039 1040,r 946 947 1008 1019,r 810 857 940 993,r 716 732 851 862,r 706 711 751 810,g 700 732 774 826,g 685 779 794 810,r 429 451 799 810,g 439 470 685 732,g 674 679 711 826,
r 507 632 731 742,g 564 617 763 779,g 679 732 774 831,r 638 649 783 794,r 523 555 637 700,g 596 612 700 711,r 418 466 662 695,g 387 402 470 549,r 68 121 468 502`}
]

// 成交量(百手)
const vols = [
    110, 57, 35, 30, 23, 32, 32, 40, 26, 26, 26, 32, 32, 23, 32, 52, 57, 57, 50, 37, 42, 30, 32, 22, 20, 23, 29, 24, 30, 39,
    71, 43, 30, 50, 32, 28, 36, 30, 32, 30, 21, 21, 24, 25, 21, 27, 28, 27, 24, 36, 32, 29, 39, 34, 30, 23, 30, 37, 34, 32,
    39, 39, 34, 28, 26, 26, 34, 34, 43, 51, 57, 47, 47, 47, 36, 42, 29, 41, 39, 34, 39, 57, 53, 42, 32, 69, 126, 371, 303, 756,
    655, 443, 277, 179, 150, 108, 82, 98, 114, 103, 130, 94, 83, 78, 90, 66, 82, 71, 73, 128, 88, 112, 85, 108, 96, 74, 314, 271, 124, 337,
    289, 184, 133, 113, 92, 92, 71, 81, 151, 115, 73, 74, 90, 92, 98, 122, 92, 124, 122, 519, 370, 315, 182, 122, 131, 90, 94, 85, 90, 69,
    103, 88, 79, 140, 71, 195, 452, 305, 342, 330, 280, 294, 198, 151, 110, 103, 99, 73, 92, 115, 82, 64, 48, 53, 50, 59, 46, 39, 41, 71,
    60, 51, 41, 43, 124, 60, 74, 50, 45, 108, 67, 62, 52, 100, 94, 103, 71, 61, 69, 75, 211, 199, 162, 172, 142, 154, 103, 97, 133, 126,
    96, 227, 528, 324, 209, 326, 400, 271, 163, 145, 90, 115, 112, 115, 67, 85, 112, 103, 105, 135, 112, 117, 162, 182, 101, 113, 128, 129, 108, 97,
    138, 126, 172, 90, 62, 83, 69, 97, 68, 64, 55, 43, 46, 46, 50, 46, 46, 32, 71, 53, 59, 135, 92, 67, 46, 66, 71, 57, 68, 60,
    53, 172, 108, 308, 264, 229, 225, 246, 225, 161, 126, 106, 150, 142, 89, 120, 108, 73, 76, 73, 106, 86, 84, 85, 81, 68, 78, 76, 101, 68,
    61, 59, 92, 85, 75, 62, 67, 142, 138, 90, 114, 92, 97, 100, 128, 117, 176, 191, 372
]
const before = [43, 43, 43, 43, 43, 26, 26, 26, 26]

const RED = '#ff4040', GREEN = '#389838', DARK = '#3c3c3c', LINE = '#c0c0c0'
const even = n => Math.round(n / 2) * 2
const cx = i => 2.6 + i * 8.018
const rect = (x, y, w, h, fill) => `<rect x="${x}" y="${y}" width="${w}" height="${h}" fill="${fill}" shape-rendering="crispEdges"/>`
const text = (x, y, s, cls = '', len = 0, anchor = 'start') =>
    `<text x="${x}" y="${y}" class="${cls}" text-anchor="${anchor}"${len ? ` textLength="${len}" lengthAdjust="spacingAndGlyphs"` : ''}>${s}</text>`
const dots = y => `<path d="M0 ${y}H2582" stroke="${LINE}" stroke-width="2" stroke-dasharray="2 6" shape-rendering="crispEdges"/>`
const hollow = (x, y, h) => h < 6 ? rect(x, y, 6, Math.max(h, 2), RED)
    : `<rect x="${x + 1}" y="${y + 1}" width="4" height="${h - 2}" fill="#fdfdfd" stroke="${RED}" stroke-width="2" shape-rendering="crispEdges"/>`

const candles = []
blocks.forEach(b => b.rows.split(',').forEach(r => {
    const [type, ...v] = r.trim().split(' ')
    candles.push([type, ...v.map(n => even(b.top + n / b.k))])
}))

function drawKline() {
    let s = [301, 473, 579, 683, 855].map(dots).join('')
    s += rect(0, 166, 2582, 2, '#b4b4b4')
    s += rect(686, 834, 1896, 38, '#c0c0c0') + rect(926, 792, 1656, 2, '#c0c0c0') + rect(2066, 634, 516, 8, '#c0c0c0')
    candles.forEach(([t, hi, a, b, lo], i) => {
        const x = even(cx(i) - 3)
        if (t === 'r') {
            s += rect(x + 2, hi, 2, lo - hi, RED) + hollow(x, a, b - a)
        } else if (t === 'g') {
            s += rect(x + 2, hi, 2, lo - hi, GREEN) + rect(x, a, 6, Math.max(b - a, 2), GREEN)
        } else {
            s += rect(x + 2, hi, 2, lo - hi, DARK) + rect(x, a, 4, 2, DARK)
        }
    })
    s += rect(2198, 304, 384, 2, '#00f') + rect(1692, 392, 890, 2, '#00f')

    // 买卖信号
    const downs = [[98, 842], [410, 860], [788, 760], [1076, 636], [1228, 566], [1334, 534], [1934, 372], [2336, 248]]
    const ups = [[250, 942], [602, 946], [892, 786], [1100, 698], [1252, 546], [1502, 690], [2104, 566], [2472, 404]]
    downs.forEach(p => s += `<use href="#down" x="${p[0] - 10}" y="${p[1]}" width="20" height="22"/>`)
    ups.forEach(p => s += `<use href="#up" x="${p[0] - 10}" y="${p[1]}" width="20" height="22"/>`)

    s += text(693, 404, '4.92', 'r', 47) + text(1711, 200, '5.61', 'r', 43) + text(2253, 150, '5.87', '', 46)
    s += text(165, 1018, '2.89', '', 46) + text(2034, 686, '4.06', 'g', 45) + text(2071, 670, '4.13 - 4.16', '', 115)
    s += text(691, 900, '3.35 - 3.48', '', 115) + text(930, 822, '3.61 - 3.62', '', 116)
    s += text(2198, 295, '5.28', 'b', 41) + text(1692, 383, '4.98', 'b', 41)
    s += `<path d="M2226 133l22 5M2232 128l-6 5 4 7M140 1007h22M147 1001l-6 6 6 6" fill="none" stroke="${DARK}" stroke-width="2"/>`

    // 标题
    s += text(3, 117, '浙富控股(日线)', '', 163)
    s += '<use href="#up" x="178" y="97" width="20" height="22"/><use href="#fold" x="208" y="96" width="24" height="24"/>'
    s += '<path d="M2527 98l10 11-10 11-10-11z" fill="none" stroke="#555" stroke-width="1.500"/><use href="#side" x="2550" y="97" width="26" height="24"/>'

    // 事件标记
    s += text(2, 1043, '319天', 'mid', 63)
    const badges = [[108, '跌', '#008000'], [710, '榜', '#804000'], [1679, '涨', '#800000'], [2178, '财', '#00407f'], [2525, '跌', '#008000'], [2532, '预', '#b85a10']]
    badges.forEach(b => s += rect(b[0], 1020, 27, 26, b[2]) + text(b[0] + 13.5, 1042, b[1], 'badge', 0, 'middle'))
    ;[503, 2413].forEach(x => s += `<path d="M${x} 1023l5 6h-10z" fill="#f00"/>` + text(x, 1045, 'S', 'money', 0, 'middle'))

    // 价格轴
    s += rect(2582, 90, 2, 958, LINE) + rect(2584, 131, 102, 2, LINE) + rect(2584, 414, 102, 2, LINE)
    const info = [['5.76', 158, ''], ['6490', 190, 'mid'], ['5.75', 226, ''], ['4906', 258, 'mid'], ['5.75', 306, 'r'], ['0.46', 338, 'r'], ['8.70%', 370, 'r'], ['30577', 402, '']]
    info.forEach(l => s += text(2683, l[1], l[0], l[2], 0, 'end'))
    s += `<path d="M2624 324l8 13h-16z" fill="${RED}"/>`
    const axis = [['4.71', 473, '61.8%'], ['4.35', 579, ''], ['3.99', 683, '38.2%'], ['3.41', 855, '19.1%']]
    axis.forEach(l => {
        s += rect(2584, l[1] - 1, 10, 2, LINE) + text(2672, l[1] + 9, l[0], 'lb', 0, 'end')
        if (l[2]) s += text(2672, l[1] + 32, l[2], 'lb', 68, 'end')
    })
    s += text(2672, 1035, '2.83', 'lb', 0, 'end')
    s += rect(2584, 986, 101, 33, LINE) + rect(2584, 988, 101, 29, '#b4f0f0') + text(2585, 1010, '2.85')
    s += rect(2572, 144, 10, 2, RED) + rect(2572, 456, 10, 2, GREEN) + '<path d="M2582 159v14l-10-7z" fill="#666"/>'
    document.getElementById('kline').innerHTML = s
}

function average(n) {
    const all = before.concat(vols)
    return vols.map((v, i) => {
        const end = i + before.length + 1
        return all.slice(end - n, end).reduce((a, b) => a + b) / n
    })
}

function drawVol() {
    const base = 1746, y = v => base - v * .8705
    let s = [1137, 1223, 1311, 1397, 1485, 1571, 1659].map(dots).join('')
    vols.forEach((v, i) => {
        const x = even(cx(i) - 3), top = even(y(v)), t = candles[i][0]
        s += t === 'r' || t === 'k' ? hollow(x, top, base - top) : rect(x, top, 6, base - top, GREEN)
    })
    ;[[5, DARK], [10, '#0078d7']].forEach(([n, c]) => {
        s += `<polyline points="${average(n).map((v, i) => (even(cx(i)) + 1) + ',' + (even(y(v)) + 1)).join(' ')}" fill="none" stroke="${c}" stroke-width="2" shape-rendering="crispEdges"/>`
    })
    s += '<use href="#fold" x="1" y="1053" width="24" height="24"/>'
    s += text(34, 1074, 'VOL-TDX(5,10)', '', 163) + text(208, 1074, 'VOLUME: 3700431', '', 206) + text(447, 1074, 'MA5: 1955064', '', 154) + text(632, 1074, 'MA10: 1461043', 'ma10', 170)
    ;[425, 611, 811].forEach(x => s += `<path d="M${x} 1077v-21M${x - 5} 1061l5-5 5 5" fill="none" stroke="${RED}" stroke-width="2"/>`)

    s += rect(2582, 1050, 4, 708, LINE) + rect(2682, 1050, 4, 708, LINE)
    for (let i = 1; i <= 7; i++) {
        const ly = Math.round(y(i * 100))
        s += rect(2586, ly - 1, 8, 2, LINE) + rect(2586, ly - 44, 3, 2, LINE) + text(2673, ly + 9, i * 10000, 'lb', 68, 'end')
    }
    s += `<path d="M2586 1730h62v27h-62" fill="none" stroke="${LINE}" stroke-width="2"/>` + text(2588, 1753, 'X100', 'lb', 56)
    document.getElementById('vol').innerHTML = s
}

function drawDates() {
    const months = [[97, 4], [265, 5], [417, 6], [577, 7], [763, 8], [930, 9], [1106, 10], [1243, 11], [1405, 12], [1589, 1], [1749, 2], [1861, 3], [2031, ''], [2192, ''], [2351, ''], [2518, 7]]
    let s = text(3, 1784, '2025年', 'lb', 78)
    months.forEach(([x, m], i) => {
        if (m !== '') s += rect(x - 1, 1760, 2, 30, LINE) + text(x + 2, 1784, m, 'lb')
        const next = months[i + 1]
        for (let q = 1; next && q < 4; q++) s += rect(Math.round(x + (next[0] - x) * q / 4), 1760, 2, 4, LINE)
    })
    s += rect(1992, 1760, 380, 30, LINE) + rect(1994, 1760, 376, 30, '#b4f0f0') + text(1995, 1783, '2026/03/24/二 71 至今涨幅39.56%', '', 370)
    s += rect(2582, 1760, 2, 30, LINE) + text(2608, 1783, '日线')
    document.getElementById('dates').innerHTML = s
}

drawKline()
drawVol()
drawDates()
```
